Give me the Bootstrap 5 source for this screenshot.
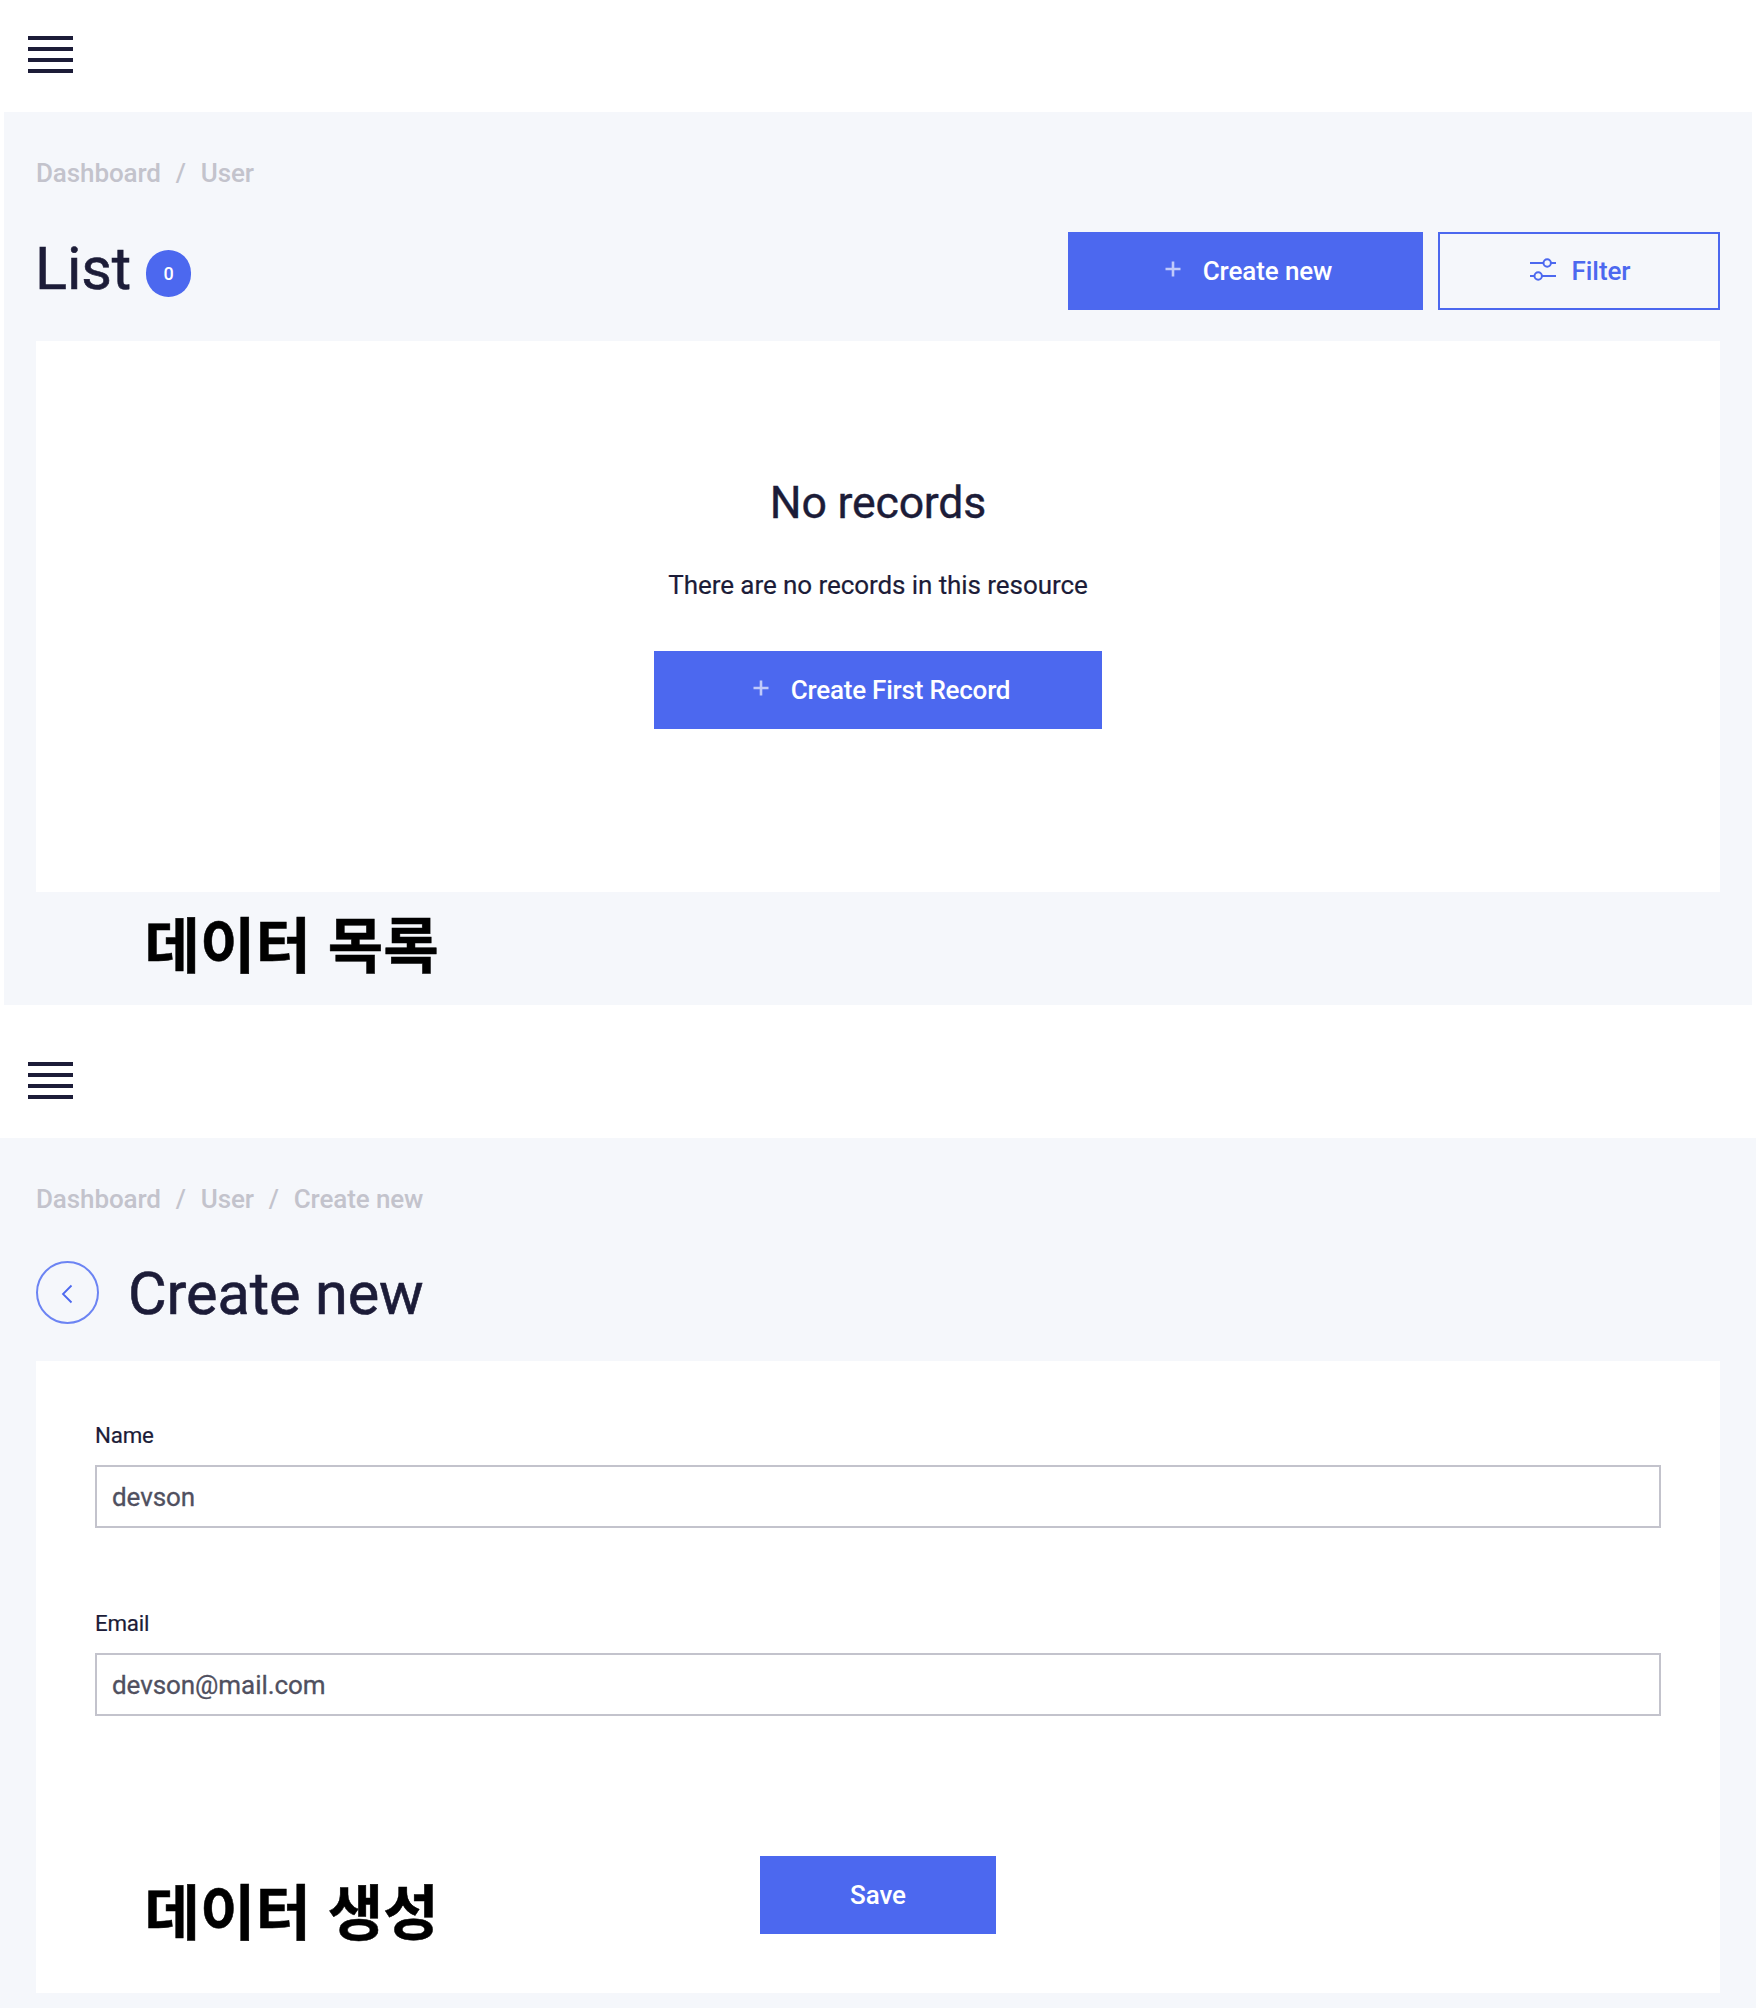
<!DOCTYPE html>
<html lang="ko">
<head>
<meta charset="utf-8">
<meta name="viewport" content="width=device-width, initial-scale=1">
<title>User admin</title>
<link href="https://cdn.jsdelivr.net/npm/bootstrap@5.3.0/dist/css/bootstrap.min.css" rel="stylesheet">
<style>
:root{--ink:#1c1c38;--accent:#4c68ef;--panel:#f5f7fb;--muted:#c3c3cc}
body{font-family:Roboto,"Noto Sans CJK KR",sans-serif;font-size:26px;line-height:26px;color:var(--ink);background:#fff;overflow-x:hidden}
.topbar{height:112px;padding:36px 28px}
.topbar-second{height:133px;padding-top:56.5px}
.burger{width:45px;height:37px;display:block;border:0;background:none;padding:0}
.burger svg{display:block}
.panel{background:var(--panel);padding:48px 32px 0}
.panel-list{height:893px;margin:0 4px}
.panel-edit{height:870px;padding:48px 36px 0}
.crumbs{--bs-breadcrumb-divider-color:var(--muted);--bs-breadcrumb-item-padding-x:14.9px;font-weight:500;margin:0;letter-spacing:-.1px;font-size:26px}
.crumbs .breadcrumb-item,.crumbs .breadcrumb-item a{color:var(--muted);text-decoration:none}
.page-title{font-size:59.4px;line-height:60px;font-weight:400;margin:0 0 0 -1px;letter-spacing:-.1px;-webkit-text-stroke:.6px var(--ink)}
.head-list{height:78px;margin-top:46px}
.head-list .page-title{padding-bottom:4px}
.count{width:45px;height:47px;border-radius:23px;background:var(--accent);font-size:18px;font-weight:500;line-height:47px;padding:0;margin:5px 0 0 15px}
.act{--bs-btn-font-size:26px;--bs-btn-line-height:26px;--bs-btn-font-weight:500;--bs-btn-border-radius:0;--bs-btn-border-width:2px;--bs-btn-padding-x:0;--bs-btn-padding-y:0;--bs-btn-color:#fff;--bs-btn-bg:var(--accent);--bs-btn-border-color:var(--accent);--bs-btn-hover-color:#fff;--bs-btn-hover-bg:#3a55d8;--bs-btn-hover-border-color:#3a55d8;height:78px;letter-spacing:-.1px}
.act-line{--bs-btn-color:var(--accent);--bs-btn-bg:transparent}
.act svg{flex:none}
.w-new{width:355px;padding-left:6px}.w-filter{width:282px;padding-left:2px}.w-first{width:448px;padding-left:7px;letter-spacing:-.22px}.w-save{width:236px}
.head-actions{gap:15px}
.plus{margin:-4px 22px 0 0}
.sliders{margin:-4px 16px 0 0}
.sheet{background:#fff;border:0;border-radius:0}
.sheet-list{margin-top:31px;height:551px;padding-top:139px}
.empty-title{font-size:44.6px;line-height:46px;font-weight:400;margin:0 0 46px;letter-spacing:-.2px;-webkit-text-stroke:.4px var(--ink)}
.empty-text{margin:0 0 53px;letter-spacing:-.07px;-webkit-text-stroke:.2px var(--ink)}
.caption-ko{font-family:"Noto Sans CJK KR",sans-serif;font-weight:700;font-size:60.3px;line-height:60px;color:#000;margin:0;-webkit-text-stroke:.5px #000}
.caption-list{margin:20px 0 0 108.500px}
.head-edit{height:63px;margin-top:49px;gap:30px}
.head-edit .page-title{padding-top:3px}
.back{width:63px;height:63px;border:2px solid #6c84f3;border-radius:50%;color:var(--accent)}
.back svg{margin:3px 1px 0 0}
.sheet-edit{margin-top:37px;height:632px;padding:61px 59px 0}
.field-label{font-size:22.3px;line-height:26px;margin:0 0 17px;display:block;letter-spacing:-.2px;-webkit-text-stroke:.2px var(--ink)}
.field-input{height:63px;border:2px solid var(--muted);border-radius:0;font-size:26px;line-height:26px;color:#50505f;padding:0 15px;letter-spacing:-.07px;-webkit-text-stroke:.3px #50505f}
.field-gap{margin-top:82px}
.sheet-foot{margin-top:140px}
.caption-edit{position:absolute;left:108.500px;top:518px}
</style>
<script src="https://cdn.jsdelivr.net/npm/bootstrap@5.3.0/dist/js/bootstrap.bundle.min.js"></script>
</head>
<body>
<header class="topbar">
  <button class="burger" aria-label="Menu"><svg width="45" height="37" fill="#1c1c38"><path d="M0 0h45v4H0zM0 11h45v4H0zM0 22h45v4H0zM0 33h45v4H0z"/></svg></button>
</header>
<main class="panel panel-list">
  <nav><ol class="breadcrumb crumbs"><li class="breadcrumb-item"><a href="#">Dashboard</a></li><li class="breadcrumb-item">User</li></ol></nav>
  <div class="head-list d-flex align-items-center justify-content-between">
    <div class="d-flex align-items-center"><h1 class="page-title">List</h1><span class="badge count">0</span></div>
    <div class="head-actions d-flex">
      <a href="#" class="btn act w-new d-flex align-items-center justify-content-center"><svg class="plus" width="16" height="16" stroke="#fff" stroke-opacity=".65" stroke-width="2.6"><path d="M8 .5v15M.5 8h15"/></svg>Create new</a>
      <a href="#" class="btn act act-line w-filter d-flex align-items-center justify-content-center"><svg class="sliders" width="26" height="23" fill="none" stroke="currentColor" stroke-width="2"><path d="M0 5h13.500M21 5H26M0 18h4.500M12 18H26"/><circle cx="17.200" cy="5" r="3.700"/><circle cx="8.200" cy="18" r="3.700"/></svg>Filter</a>
    </div>
  </div>
  <section class="card sheet sheet-list d-flex flex-column align-items-center">
    <h2 class="empty-title">No records</h2>
    <p class="empty-text">There are no records in this resource</p>
    <a href="#" class="btn act w-first d-flex align-items-center justify-content-center"><svg class="plus" width="16" height="16" stroke="#fff" stroke-opacity=".65" stroke-width="2.6"><path d="M8 .5v15M.5 8h15"/></svg>Create First Record</a>
  </section>
  <p class="caption-ko caption-list">데이터 목록</p>
</main>
<header class="topbar topbar-second">
  <button class="burger" aria-label="Menu"><svg width="45" height="37" fill="#1c1c38"><path d="M0 0h45v4H0zM0 11h45v4H0zM0 22h45v4H0zM0 33h45v4H0z"/></svg></button>
</header>
<main class="panel panel-edit">
  <nav><ol class="breadcrumb crumbs"><li class="breadcrumb-item"><a href="#">Dashboard</a></li><li class="breadcrumb-item"><a href="#">User</a></li><li class="breadcrumb-item">Create new</li></ol></nav>
  <div class="head-edit d-flex align-items-center">
    <a href="#" class="back d-flex align-items-center justify-content-center" aria-label="Back"><svg width="12" height="20" fill="none" stroke="currentColor" stroke-width="1.800"><path d="M10.500 1.500 2 10l8.500 8.500"/></svg></a>
    <h1 class="page-title">Create new</h1>
  </div>
  <form class="card sheet sheet-edit">
    <div><label class="field-label" for="name">Name</label><input id="name" class="form-control field-input" value="devson"></div>
    <div class="field-gap"><label class="field-label" for="email">Email</label><input id="email" class="form-control field-input" value="devson@mail.com"></div>
    <div class="sheet-foot d-flex justify-content-center"><button type="button" class="btn act w-save">Save</button></div>
    <p class="caption-ko caption-edit">데이터 생성</p>
  </form>
</main>
</body>
</html>
